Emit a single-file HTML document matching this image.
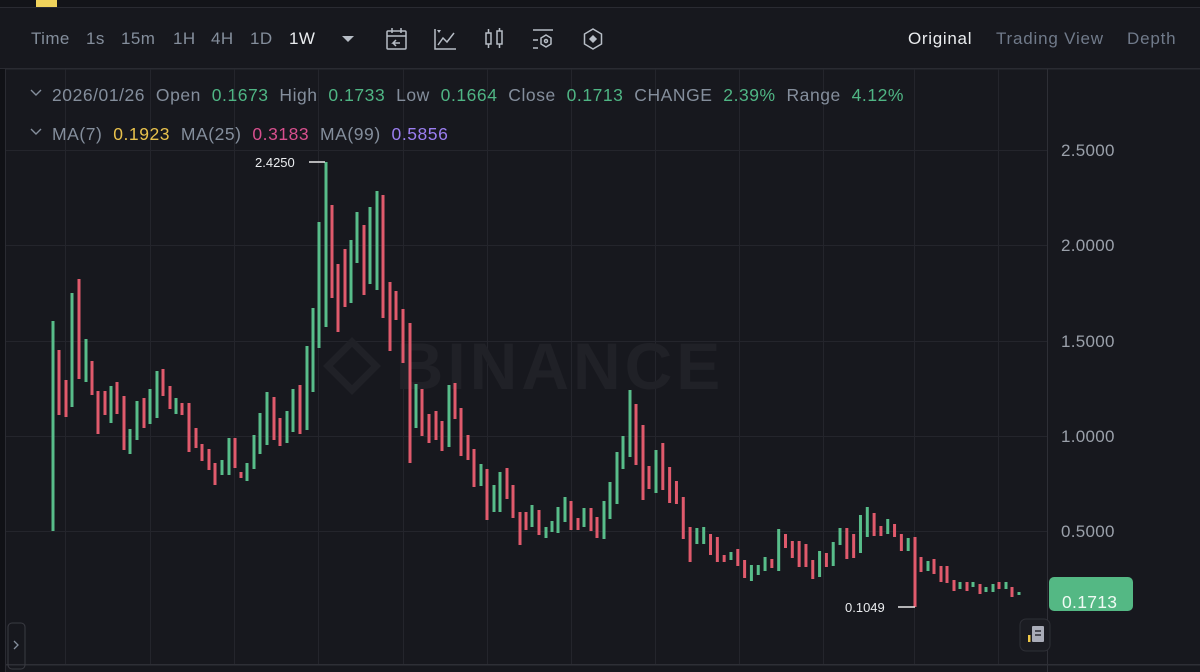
<!DOCTYPE html>
<html><head><meta charset="utf-8">
<style>
*{margin:0;padding:0;box-sizing:border-box}
body{width:1200px;height:672px;overflow:hidden;background:#17181e;font-family:"Liberation Sans",sans-serif;position:relative}
.t{position:absolute;white-space:nowrap}
.tb{font-size:17px;letter-spacing:0.4px}
.ax{font-size:17px;color:#9aa0aa;letter-spacing:0.3px}
</style></head><body>
<svg id="s" width="1200" height="672" style="position:absolute;left:0;top:0">
<rect x="0" y="0" width="1200" height="672" fill="#17181e"/>
<rect x="0" y="0" width="1200" height="7" fill="#131419"/>
<rect x="36" y="0" width="21" height="7" fill="#f0d35c"/>
<rect x="0" y="7" width="1200" height="1" fill="#2a2b32"/>
<rect x="0" y="68" width="1200" height="1.5" fill="#2a2b32"/>
<rect x="0" y="69" width="5" height="603" fill="#101116"/>
<rect x="5" y="69" width="1" height="603" fill="#2a2b32"/>
<rect x="6" y="664" width="1194" height="1.5" fill="#2e2f36"/>
<g id="grid" fill="#24252c"></g>
<text x="560" y="389" font-family="Liberation Sans" font-weight="bold" font-size="66" fill="#202127" text-anchor="middle" letter-spacing="4">BINANCE</text>
<g transform="translate(352,366) rotate(45)" fill="none" stroke="#202127" stroke-width="7"><rect x="-17" y="-17" width="34" height="34"/></g>
<g id="c"></g>
<line x1="309" y1="162" x2="325" y2="162" stroke="#e8e8e8" stroke-width="1.5"/>
<line x1="898" y1="607" x2="915" y2="607" stroke="#e8e8e8" stroke-width="1.5"/>
<rect x="1049" y="577" width="84" height="34" rx="5" fill="#54b884"/>
<rect x="8" y="623" width="17" height="46" rx="4" fill="none" stroke="#3a3b42" stroke-width="1"/>
<path d="M14 641l4 4-4 4" fill="none" stroke="#848e9c" stroke-width="1.3"/>
<rect x="1020" y="619" width="30" height="32" rx="6" fill="#1b1c22" stroke="#2e2f36"/>
<rect x="1032" y="626" width="12" height="16" rx="1" fill="#a9acb8"/>
<path d="M1035 631h6M1035 635h6" stroke="#2a2b32" stroke-width="1.5"/>
<rect x="1028" y="635" width="2.5" height="7" fill="#f0c948"/>
<g fill="none" stroke="#b7bdc6" stroke-width="1.5">
<rect x="387" y="31" width="19" height="18" rx="1"/><path d="M387 36h19M392 28v5M401 28v5M400 43h-7l3-3M393 43l3 3"/>
<path d="M435 29v20h21M438 45l5-7 4 4 7-9"/><path d="M437 30l2 3 2-3" fill="#b7bdc6" stroke="none"/>
<rect x="486" y="33" width="5" height="11"/><rect x="497" y="31" width="5" height="13"/><path d="M488.5 29v4M488.5 44v4M499.5 28v3M499.5 44v4"/>
<path d="M533 30h20M533 40h5M533 48h5"/><path d="M546 35l5 3v6l-5 3-5-3v-6z"/><circle cx="546" cy="41" r="1.5"/>
<path d="M593 29l8.5 5v10l-8.5 5-8.5-5v-10z"/><path d="M593 36l3 3-3 3-3-3z" fill="#b7bdc6"/>
</g>
<path d="M342 36l6 6 6-6z" fill="#b7bdc6"/>
<path d="M31 90l5 5 5-5M31 129l5 5 5-5" fill="none" stroke="#848e9c" stroke-width="1.4"/>
</svg>
<div class="t tb" style="left:31px;top:29px;color:#848e9c">Time</div>
<div class="t tb" style="left:86px;top:29px;color:#848e9c">1s</div>
<div class="t tb" style="left:121px;top:29px;color:#848e9c">15m</div>
<div class="t tb" style="left:173px;top:29px;color:#848e9c">1H</div>
<div class="t tb" style="left:211px;top:29px;color:#848e9c">4H</div>
<div class="t tb" style="left:250px;top:29px;color:#848e9c">1D</div>
<div class="t tb" style="left:289px;top:29px;color:#eaecef">1W</div>
<div class="t tb" style="left:908px;top:29px;color:#eaecef;letter-spacing:0.7px">Original</div>
<div class="t tb" style="left:996px;top:29px;color:#707a8a;letter-spacing:0.8px">Trading View</div>
<div class="t tb" style="left:1127px;top:29px;color:#707a8a;letter-spacing:0.8px">Depth</div>
<div class="t" style="left:52px;top:85px;font-size:17.5px;letter-spacing:0.55px;color:#848e9c">2026/01/26&nbsp; Open&nbsp; <span style="color:#4fb584">0.1673</span>&nbsp; High&nbsp; <span style="color:#4fb584">0.1733</span>&nbsp; Low&nbsp; <span style="color:#4fb584">0.1664</span>&nbsp; Close&nbsp; <span style="color:#4fb584">0.1713</span>&nbsp; CHANGE&nbsp; <span style="color:#4fb584">2.39%</span>&nbsp; Range&nbsp; <span style="color:#4fb584">4.12%</span></div>
<div class="t" style="left:52px;top:124px;font-size:17.5px;letter-spacing:0.55px;color:#848e9c">MA(7)&nbsp; <span style="color:#e8c14c">0.1923</span>&nbsp; MA(25)&nbsp; <span style="color:#d84f8e">0.3183</span>&nbsp; MA(99)&nbsp; <span style="color:#9b7ef0">0.5856</span></div>
<div class="t ax" style="left:1061px;top:141px">2.5000</div>
<div class="t ax" style="left:1061px;top:236px">2.0000</div>
<div class="t ax" style="left:1061px;top:332px">1.5000</div>
<div class="t ax" style="left:1061px;top:427px">1.0000</div>
<div class="t ax" style="left:1061px;top:522px">0.5000</div>
<div class="t ax" style="left:1062px;top:592px;color:#eefaf3;font-size:17.5px">0.1713</div>
<div class="t" style="left:255px;top:155px;font-size:13px;color:#eaecef">2.4250</div>
<div class="t" style="left:845px;top:600px;font-size:13px;color:#eaecef">0.1049</div>
<script>
var N="http://www.w3.org/2000/svg";
function R(p,x,y,w,h,f){var r=document.createElementNS(N,"rect");r.setAttribute("x",x);r.setAttribute("y",y);r.setAttribute("width",w);r.setAttribute("height",h);r.setAttribute("fill",f);p.appendChild(r);}
var g=document.getElementById("grid");
[65,150,234,318,403,487,571,655,739,823,914,998].forEach(function(x){R(g,x,69,1,595,"#24252c")});
R(g,1047,69,1,603,"#2e2f36");
[150,245,341,436,531].forEach(function(y){R(g,6,y,1041,1,"#24252c")});
var A=[[53,"g",321,531],[59,"r",350,415],[66,"r",380,417],[72,"g",293,407],[79,"r",279,379],[86,"g",339,382],[92,"r",361,395],[98,"r",391,434],[105,"r",391,415],[111,"g",386,423],[117,"r",382,414],[124,"r",396,450],[130,"g",429,454],[137,"g",401,440],[144,"r",398,428],[150,"g",389,424],[157,"g",371,418],[163,"r",369,396],[170,"r",386,409],[176,"g",398,414],[182,"r",403,415],[189,"r",403,452],[196,"r",428,448],[202,"r",444,461],[209,"r",449,470],[215,"r",463,485],[222,"g",460,475],[229,"g",438,475],[235,"r",438,468],[241,"r",472,478],[247,"g",463,481],[254,"g",435,469],[260,"g",413,454],[267,"g",392,445],[274,"r",397,440],[280,"r",418,446],[287,"g",411,443],[293,"g",389,432],[300,"r",385,434],[307,"g",346,430],[313,"g",308,392],[319,"g",222,348],[326,"g",162,327],[332,"r",205,298],[338,"r",264,332],[345,"r",249,307],[351,"g",240,303],[357,"g",212,263],[364,"r",225,295],[370,"g",207,284],[377,"g",191,290],[383,"r",195,318],[390,"r",282,351],[396,"r",291,320],[403,"r",309,363],[410,"r",323,463],[416,"g",384,428],[422,"r",389,436],[429,"r",414,443],[436,"r",411,440],[442,"r",421,451],[449,"g",385,447],[455,"r",383,419],[461,"r",408,456],[468,"r",435,460],[474,"r",449,487],[481,"g",464,486],[487,"r",469,520],[494,"g",485,512],[500,"g",472,512],[507,"r",468,499],[513,"r",485,518],[520,"r",512,545],[526,"r",512,530],[532,"g",505,527],[539,"r",510,535],[546,"g",527,538],[552,"g",521,532],[558,"g",507,533],[565,"g",497,522],[571,"r",501,530],[578,"r",518,530],[584,"g",508,527],[591,"r",508,531],[597,"r",517,538],[604,"g",501,539],[610,"g",482,519],[617,"g",452,504],[623,"g",436,469],[630,"g",390,457],[636,"r",404,465],[643,"r",425,500],[649,"r",466,489]];
var B=[["g",450,493],["r",443,490],["r",467,503],["r",481,504],["r",497,539],["r",527,562],["g",528,544],["g",527,544],["r",534,555],["r",537,562],["r",555,562],["g",552,560],["r",549,566],["r",560,578],["g",565,581],["g",565,575],["g",557,571],["r",559,568],["g",529,571],["r",534,548],["r",541,558],["r",541,567],["r",544,567],["r",560,579],["g",551,577],["r",553,567],["g",542,566],["g",528,545],["r",528,559],["r",534,558],["g",515,553],["g",507,537],["r",513,536],["r",526,536],["g",519,534],["r",524,537],["r",534,551],["g",538,551],["r",537,607]];
B.forEach(function(b,i){A.push([656+i*(915-656)/(B.length-1),b[0],b[1],b[2]])});
var C=[[921,"r",557,572],[928,"g",561,571],[934,"r",559,574],[941,"r",566,582],[947,"r",566,583],[954,"r",580,591],[960,"g",582,589],[967,"r",582,591],[973,"g",582,587],[980,"r",584,594],[986,"g",587,592],[993,"g",584,592],[999,"r",582,589],[1006,"g",582,589],[1012,"r",587,597],[1019,"g",592,595]];
A=A.concat(C);
var cg=document.getElementById("c");
A.forEach(function(a){R(cg,a[0]-1.5,a[2],3,Math.max(2,a[3]-a[2]),a[1]=="g"?"#58bd8a":"#e05a6c")});
</script>
</body></html>
